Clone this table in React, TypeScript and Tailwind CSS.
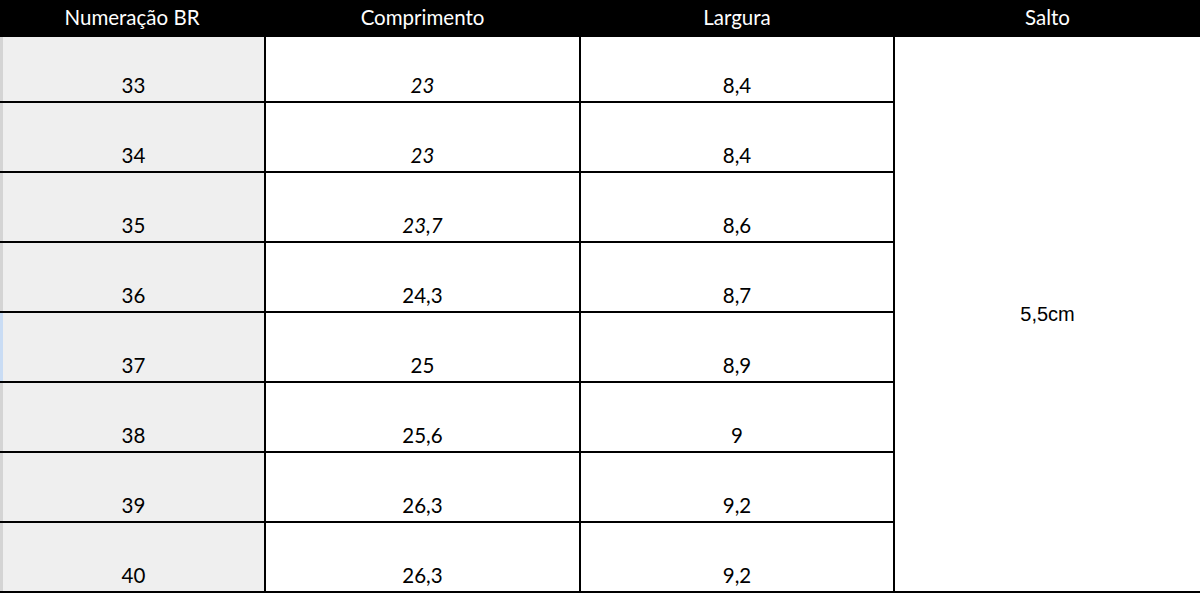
import React from "react";

const rows = [
  { n: "33", c: "23", ci: true, l: "8,4" },
  { n: "34", c: "23", ci: true, l: "8,4" },
  { n: "35", c: "23,7", ci: true, l: "8,6" },
  { n: "36", c: "24,3", ci: false, l: "8,7" },
  { n: "37", c: "25", ci: false, l: "8,9" },
  { n: "38", c: "25,6", ci: false, l: "9" },
  { n: "39", c: "26,3", ci: false, l: "9,2" },
  { n: "40", c: "26,3", ci: false, l: "9,2" },
];

export default function App() {
  return (
    <div className="w-[1200px] h-[595px] bg-white overflow-hidden" style={{ fontFamily: "Lato, 'Open Sans', sans-serif" }}>
      <div className="grid grid-cols-[264px_313px_312px_1fr] grid-rows-[35px_64px_repeat(7,68px)] gap-[2px] bg-black pb-[2px] text-black">
        <div className="bg-black text-white text-[20.5px] flex items-center justify-center pb-[1px]">Numeração BR</div>
        <div className="bg-black text-white text-[20.5px] flex items-center justify-center pb-[1px]">Comprimento</div>
        <div className="bg-black text-white text-[20.5px] flex items-center justify-center pb-[1px]">Largura</div>
        <div className="bg-black text-white text-[20.5px] flex items-center justify-center pb-[1px]">Salto</div>
        {rows.map((r, i) => (
          <React.Fragment key={r.n}>
            <div
              className={`bg-[#efefef] flex items-end justify-center pb-[6px] text-[20.5px] leading-none border-l-[3px] ${
                i === 4 ? "border-[#c9dcf4]" : "border-[#d4d4d4]"
              }`}
              style={{ gridColumn: 1 }}
            >
              {r.n}
            </div>
            <div
              className={`bg-white flex items-end justify-center pb-[6px] text-[20.5px] leading-none ${r.ci ? "italic" : ""}`}
              style={{ gridColumn: 2 }}
            >
              {r.c}
            </div>
            <div className="bg-white flex items-end justify-center pb-[6px] text-[20.5px] leading-none" style={{ gridColumn: 3 }}>
              {r.l}
            </div>
            {i === 0 && (
              <div
                className="bg-white row-span-8 flex items-center justify-center text-[20px]"
                style={{ gridColumn: 4, fontFamily: "'Liberation Sans', Arial, sans-serif" }}
              >
                5,5cm
              </div>
            )}
          </React.Fragment>
        ))}
      </div>
    </div>
  );
}
